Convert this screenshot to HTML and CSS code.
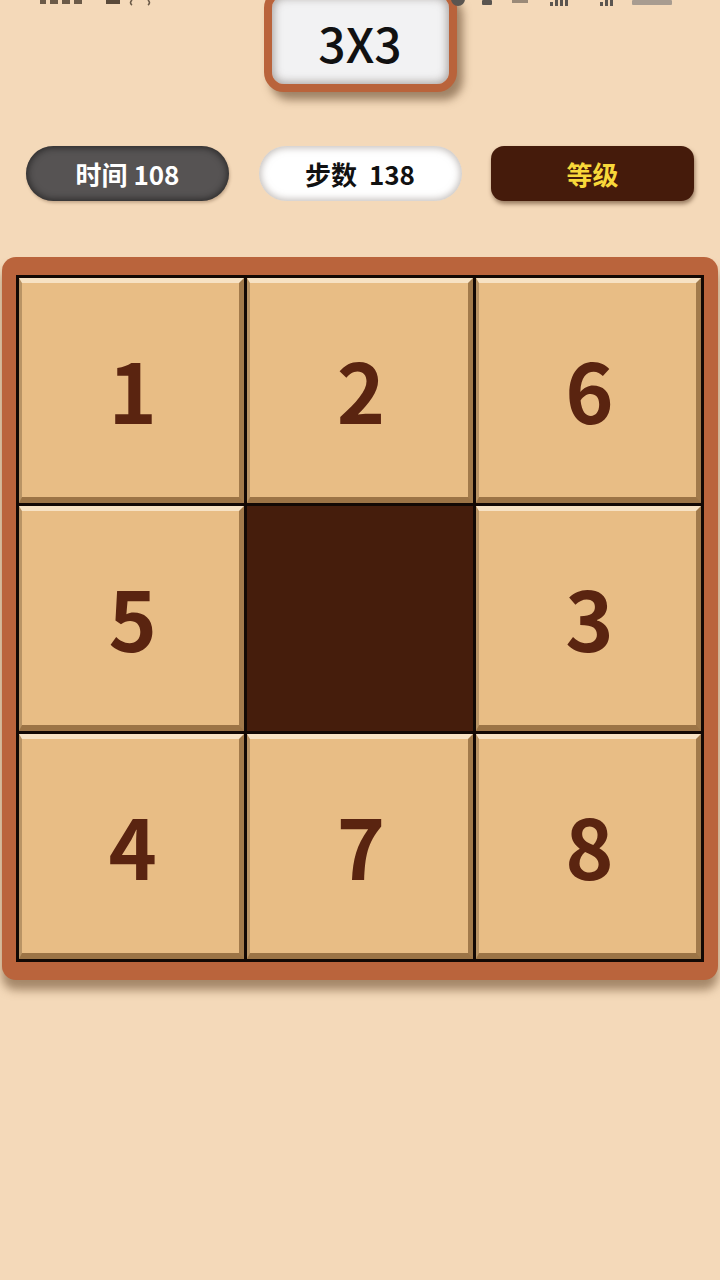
FILE: index.html
```html
<!DOCTYPE html>
<html lang="zh">
<head>
<meta charset="utf-8">
<title>3X3</title>
<link rel="stylesheet" href="styles.css">
</head>
<body>
<div class="status">
  <svg class="status-left" width="120" height="6" viewBox="0 0 120 6">
    <rect x="0" y="0" width="6" height="4" fill="#6b5a48"/>
    <rect x="10" y="0" width="8" height="4" fill="#6b5a48"/>
    <rect x="22" y="0" width="8" height="4" fill="#6b5a48"/>
    <rect x="34" y="0" width="8" height="4" fill="#6b5a48"/>
    <rect x="66" y="0" width="14" height="4" fill="#5a4a3a"/>
    <path d="M92 0 q-3 3 0 5 M108 0 q3 3 0 5" stroke="#6b5a48" stroke-width="1.6" fill="none"/>
  </svg>
  <svg class="status-right" width="230" height="8" viewBox="0 0 230 8">
    <circle cx="8" cy="-1" r="7" fill="#5a5550"/>
    <rect x="32" y="0" width="10" height="5" rx="1" fill="#5a5550"/>
    <rect x="62" y="0" width="16" height="3" fill="#9a8a78"/>
    <rect x="100" y="2" width="3" height="4" fill="#5a5550"/>
    <rect x="105" y="0" width="3" height="6" fill="#5a5550"/>
    <rect x="110" y="0" width="3" height="6" fill="#5a5550"/>
    <rect x="115" y="0" width="3" height="6" fill="#5a5550"/>
    <rect x="150" y="2" width="3" height="4" fill="#5a5550"/>
    <rect x="155" y="0" width="3" height="6" fill="#5a5550"/>
    <rect x="160" y="0" width="3" height="6" fill="#5a5550"/>
    <rect x="182" y="0" width="40" height="5" rx="1" fill="#a89c90"/>
  </svg>
</div>

<main class="page">
  <div class="title-box"><span>3X3</span></div>

  <div class="info-row">
    <div class="pill pill-time">时间 108</div>
    <div class="pill pill-steps">步数&nbsp;&nbsp;138</div>
    <div class="pill pill-level">等级</div>
  </div>

  <div class="board">
    <div class="grid">
      <div class="tile">1</div>
      <div class="tile">2</div>
      <div class="tile">6</div>
      <div class="tile">5</div>
      <div class="tile empty"></div>
      <div class="tile">3</div>
      <div class="tile">4</div>
      <div class="tile">7</div>
      <div class="tile">8</div>
    </div>
  </div>
</main>
</body>
</html>
```

FILE: styles.css
```css
* { box-sizing: border-box; }

html, body {
  margin: 0;
  padding: 0;
  background: #f4d9b9;
  width: 720px;
  height: 1280px;
  overflow: hidden;
  font-family: "Noto Sans CJK SC", "Noto Sans", sans-serif;
}

.status {
  position: absolute;
  top: 0;
  left: 0;
  width: 720px;
  height: 8px;
  z-index: 5;
  pointer-events: none;
}
.status-left { position: absolute; left: 40px; top: 0; }
.status-right { position: absolute; left: 450px; top: 0; }

.page {
  display: flex;
  flex-direction: column;
  align-items: center;
}

.title-box {
  margin-top: -12px;
  width: 193px;
  height: 104px;
  border: 8px solid #b9633b;
  border-radius: 20px;
  background: #f2f2f3;
  box-shadow: inset 0 0 8px 2px rgba(110, 100, 95, 0.55), 6px 8px 8px rgba(90, 60, 35, 0.55);
  display: flex;
  align-items: center;
  justify-content: center;
  padding-top: 4px;
}
.title-box span {
  font-size: 48px;
  font-weight: 500;
  color: #111;
  line-height: 1;
}

.info-row {
  margin-top: 54px;
  width: 720px;
  padding: 0 26px;
  display: flex;
  justify-content: space-between;
}

.pill {
  width: 203px;
  height: 55px;
  display: flex;
  align-items: center;
  justify-content: center;
  font-size: 26px;
  font-weight: 700;
  line-height: 1;
}
.pill-time {
  border-radius: 28px;
  background: #565353;
  color: #fff;
  box-shadow: inset 0 0 6px 2px rgba(20, 20, 20, 0.6), 1px 2px 3px rgba(90, 60, 35, 0.3);
}
.pill-steps {
  border-radius: 28px;
  background: #fff;
  color: #111;
  box-shadow: inset 0 0 7px 2px rgba(150, 140, 135, 0.55);
}
.pill-level {
  border-radius: 13px;
  background: #451b0b;
  color: #f8d83a;
  box-shadow: 1px 3px 4px rgba(60, 30, 10, 0.5);
}

.board {
  margin-top: 56px;
  width: 716px;
  padding: 18px 14px 18px 14px;
  background: #ba643c;
  border-radius: 14px;
  box-shadow: 0 10px 10px rgba(100, 70, 40, 0.55);
}

.grid {
  display: grid;
  grid-template-columns: repeat(3, 1fr);
  grid-template-rows: repeat(3, 225px);
  gap: 3px;
  padding: 3px;
  background: #120804;
}

.tile {
  background: #e8bd85;
  border-top: 5px solid #f7e2c4;
  border-right: 5px solid #a27a4b;
  border-bottom: 6px solid #9c7446;
  border-left: 3px solid #b99465;
  display: flex;
  align-items: center;
  justify-content: center;
  font-size: 82px;
  font-weight: 700;
  color: #5a2410;
  line-height: 1;
  padding-bottom: 2px;
  padding-left: 4px;
}
.tile.empty {
  background: #451d0c;
  border: none;
}
```
